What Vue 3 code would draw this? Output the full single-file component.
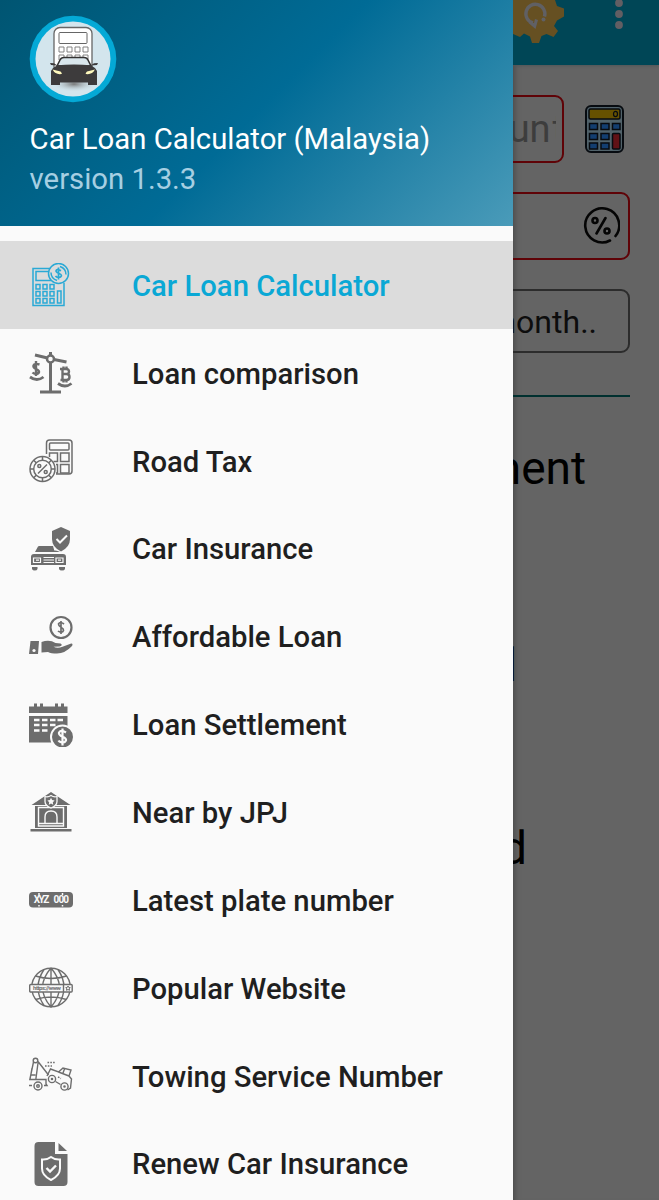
<script setup>
import { ref } from 'vue';

const active = ref('calculator');

const items = [
  { id: 'calculator', label: 'Car Loan Calculator' },
  { id: 'comparison', label: 'Loan comparison' },
  { id: 'tax', label: 'Road Tax' },
  { id: 'insurance', label: 'Car Insurance' },
  { id: 'affordable', label: 'Affordable Loan' },
  { id: 'settlement', label: 'Loan Settlement' },
  { id: 'office', label: 'Near by JPJ' },
  { id: 'plate', label: 'Latest plate number' },
  { id: 'website', label: 'Popular Website' },
  { id: 'towing', label: 'Towing Service Number' },
  { id: 'renew', label: 'Renew Car Insurance' }
];
</script>

<template>
  <div class="screen">
    <!-- Navigation drawer -->
    <aside class="drawer">
      <header class="drawer-header">
        <svg class="logo" viewBox="0 0 88 88">
          <defs>
            <radialGradient id="shade">
              <stop offset="0" stop-color="#777" />
              <stop offset="1" stop-color="#d3e5ed" stop-opacity="0" />
            </radialGradient>
          </defs>
          <circle cx="44" cy="44" r="43.3" fill="#04a9d6" />
          <circle cx="44" cy="44" r="37.5" fill="#d3e5ed" />
          <rect x="25" y="12.5" width="38" height="45" rx="6" fill="#fff" stroke="#666" stroke-width="1.3" />
          <rect x="30" y="17.5" width="28" height="11" rx="1" fill="#fff" stroke="#666" />
          <g fill="#fff" stroke="#777" stroke-width=".9">
            <path d="M30 32h5v5h-5zM38 32h5v5h-5zM46 32h5v5h-5zM54 32h5v5h-5zM30 40h5v5h-5zM38 40h5v5h-5zM46 40h5v5h-5zM54 40h5v5h-5z" />
          </g>
          <ellipse cx="45" cy="69" rx="23" ry="8" fill="url(#shade)" />
          <path d="M28 51l3-6q1-2.500 4-2.500h20q3 0 4 2.500l3 6z" fill="#d9e6ec" stroke="#333" stroke-width="1.600" />
          <path d="M22 70V56l2-3 4-2.500-6-.5-1-2 4 .2 3 2q17-1.500 34 0l3-2 4-.2-1 2-6 .5 4 2.500 2 3v14h-9v-2.500H31V70z" fill="#3d3b3c" />
          <path d="M23.500 54.500l8 2q2 2 1 2.500-6 1-9-4.500zM66 54.500l-8 2q-2 2-1 2.500 6 1 9-4.500z" fill="#fff9bd" />
        </svg>
        <div class="title">Car Loan Calculator (Malaysia)</div>
        <div class="version">version 1.3.3</div>
      </header>

      <nav class="menu">
        <a
          v-for="item in items"
          :key="item.id"
          class="menu-item"
          :class="{ active: item.id === active }"
          @click="active = item.id"
        >
          <svg class="icon" viewBox="0 0 44 44">
            <g v-if="item.id === 'calculator'" fill="none" stroke="currentColor" stroke-width="1.5">
              <path d="M21 5.500H4v37h31V20M20 8.500H7v9h15" />
              <path d="M7 21.500h4V26H7zM14 21.500h4V26h-4zM21 21.500h4V26h-4zM7 28.500h4V33H7zM14 28.500h4V33h-4zM21 28.500h4V33h-4zM7 35.500h4V40H7zM14 35.500h4V40h-4zM21 35.500h4V40h-4zM28.500 28H32v12h-3.500z" />
              <circle cx="29.500" cy="10.500" r="10" />
              <path d="M28 17.500q-6-2-6-8M31 3.500q6 2 6 8" />
              <path d="M32 7.800q-4.500-2.500-5 0c0 3 5.500 2 5.500 5-1 2.700-5 1.700-6 .2M29.500 4.500v12" stroke-width="1.700" />
            </g>
            <g v-else-if="item.id === 'comparison'" fill="none" stroke="currentColor" stroke-width="3">
              <path d="M21.500 12v28M11 41h21M6 4l12.500 3M25 8.500L37.500 11M21.500 1v3" />
              <circle cx="21.500" cy="8" r="3.500" stroke-width="2.500" />
              <path d="M1 26q7 5 13.500 0M29 32.500q7 5 13.500 0" stroke-width="2.800" />
              <path d="M10.500 13.500q-5-1.500-6 1c-1 4 6 3 5.500 6.500-1 3-5 2-6.500.5M7 10v15" stroke-width="2.400" />
              <path d="M33.500 18.500V29M31 18h6q3 0 3 2.600t-3 2.400h-3.500 4q3 0 3 3t-3 3h-6M34.500 15.500v3M37.500 15.500v3M34.500 28.500v3M37.500 28.500v3" stroke-width="2.400" />
            </g>
            <g v-else-if="item.id === 'tax'" fill="none" stroke="currentColor" stroke-width="1.500">
              <path d="M17.500 15V4q0-3 3-3H40q3 0 3 3v28q0 3-3 3H27" />
              <rect x="20.500" y="4" width="19.500" height="7" rx="1" />
              <path d="M20.500 18v-4h8v8.500h-4M31.500 14h8.500v8.500h-8.500zM27 25.500h1.500V34H27M31.500 25.500H40V34h-8.500z" />
              <circle cx="13.500" cy="30" r="12.500" />
              <circle cx="13.500" cy="30" r="8.800" />
              <path d="M9 34.500l9-9M13.500 17.500V21M13.500 39v3.500M1 30h3.500M22.500 30H26M4.700 21.200l2.500 2.500M22.300 21.200l-2.500 2.500M4.700 38.800l2.500-2.500M22.300 38.800l-2.500-2.500" />
              <circle cx="10.300" cy="27" r="1.500" /><circle cx="16.700" cy="33" r="1.500" />
            </g>
            <g v-else-if="item.id === 'insurance'" fill="currentColor">
              <path d="M10 19h14q1 4 2 6H6l3-5.500zM2 30q0-3 3-3h29q3 0 3 3v8H2zM3 40h5.500v2q-.5 1.500-2.700 1.500T3 42zM30 40h6v2q-.5 1.500-3 1.500T30 42zM23 25q3-3 8 0z" />
              <path d="M32 0l9 4v8q0 8-9 12.500-9-4.500-9-12.500V4z" />
              <path d="M27.500 12l3.500 3.500 7-7" fill="none" stroke="#fafafa" stroke-width="2" />
              <path d="M4.500 31h7v4.500h-7zM27 31h7v4.500h-7zM14.500 30.500H25M14.500 35.500H25M14.500 33H25M7 33.200h3M29 33.200h3" fill="none" stroke="#fafafa" stroke-width="1.200" />
            </g>
            <g v-else-if="item.id === 'affordable'" fill="currentColor">
              <circle cx="32" cy="12.500" r="10.500" fill="none" stroke="currentColor" stroke-width="2.200" />
              <path d="M35 9q-4-3-5.500 0c0 4 5.500 3 5 6.500-1 3-5 1-5.500.5M32 6v13" fill="none" stroke="currentColor" stroke-width="1.700" />
              <path d="M1.500 26H10l-1 13H0zM12.500 27q8-3 14 1l5 .5q3 2-1 3l-6 .2q4 2 9 0l8-3q3-.5 1.500 2.300-7 7.500-15 7.500-6 0-9-1.500l-6.500.5z" />
              <circle cx="5" cy="35.500" r="1.600" fill="#fafafa" />
            </g>
            <g v-else-if="item.id === 'settlement'" fill="currentColor">
              <path d="M0 3.500h38.500v6.500H0zM5 .5h3v4H5zM11 .5h3v4h-3zM26 .5h3v4h-3zM32 .5h3v4h-3zM0 13h38.500v10Q24 22 22.500 39.500H0z" />
              <path d="M5 17h5.500M13 17h5.500M21 17h5.500M28.500 17H34M5 22h5.500M13 22h5.500M21 22h5.500M5 27.500h5.500M13 27.500h5.500" fill="none" stroke="#fafafa" stroke-width="2.500" />
              <circle cx="33.500" cy="34" r="11.500" stroke="#fafafa" stroke-width="2" />
              <path d="M37 29.500q-5-3-7 0c-1 5 8 3.500 7 8-2 4-7 1-7.500 0M33.500 25.500v17" fill="none" stroke="#fafafa" stroke-width="2.200" />
            </g>
            <g v-else-if="item.id === 'office'" fill="currentColor">
              <path d="M2.500 15L22 2l19.500 13zM6 16h32v22H6zM1.500 39h41v2.500h-41z" />
              <path d="M9.500 17.500h25V36h-25zM10 33.500h24M16 33v-6q0-6 6-6t6 6v6" fill="none" stroke="#fafafa" stroke-width="1.400" />
              <path d="M22 5.500q3 2 6 1v5q0 4-6 6.500-6-2.500-6-6.500v-5q3 1 6-1z" stroke="#fafafa" stroke-width="1.300" />
              <path d="M22 7.800l1.100 2.300 2.500.3-1.800 1.800.4 2.500-2.200-1.200-2.200 1.200.4-2.500-1.800-1.800 2.500-.3z" fill="#fafafa" />
            </g>
            <g v-else-if="item.id === 'plate'">
              <rect x="0" y="14" width="44" height="15.500" rx="4" fill="currentColor" />
              <text x="4.800" y="25.300" class="plate-text" textLength="15.500">XYZ</text>
              <text x="24.500" y="25.300" class="plate-text" textLength="15.500">000</text>
              <path d="M10 15v2M33.500 15v2M10 27v1.500M33.500 27v1.500" stroke="#fafafa" stroke-width="1.500" />
            </g>
            <g v-else-if="item.id === 'website'" fill="none" stroke="currentColor" stroke-width="1.400">
              <circle cx="22" cy="21.500" r="19.300" />
              <path d="M22 2v39M22 2Q5 21.500 22 41Q39 21.500 22 2M15 3.500Q3 21.500 15 39.500M29 3.500q12 18 0 36M6.500 10q15.500 5 31 0M6.500 33.500q15.500-5 31 0" />
              <rect x=".7" y="18.500" width="42.500" height="7.500" rx="1" fill="#fafafa" />
              <path d="M34.500 18.500V26" />
              <path d="M39 20l.8 1.500 1.500.2-1.100 1 .3 1.600-1.500-.8-1.500.8.3-1.600-1.100-1 1.500-.2z" stroke-width="1" />
              <text x="4" y="24.300" class="url-text" textLength="28">https://www</text>
            </g>
            <g v-else-if="item.id === 'towing'" fill="none" stroke="currentColor" stroke-width="1.400">
              <circle cx="6.500" cy="6.500" r="2.300" />
              <path d="M4.500 8L.8 25.500h6L9 9M9 7.500L19.500 21M3 14l-2 11.500M.8 25.500H17V30l1 1.500h-3M0 31.500h3M1.500 21h5" />
              <circle cx="9" cy="32" r="4" /><circle cx="9" cy="32" r="1.300" />
              <path d="M19 20l2.500-5 8 3 4.500-4 8 2-2 6 2.500 3-1 9-3 2M26.500 27.500l5 3M19 20l-1 2M29.500 18l10.500 4M35.500 15l-1.500 4" />
              <circle cx="23" cy="25" r="3.600" /><circle cx="35.500" cy="32.500" r="3.600" />
              <circle cx="23" cy="25" r=".6" /><circle cx="35.500" cy="32.500" r=".6" />
              <path d="M18.500 8.500H26M16 12h7M29 23l3 1.500" stroke-dasharray="1.600 1.200" />
            </g>
            <g v-else fill="currentColor">
              <path d="M9.500 0H26v12h12.500v28q0 4-4 4h-25q-4 0-4-4V4q0-4 4-4zM29.500 1l8.500 8h-8.500z" />
              <path d="M22 15q4 3 9 2.500v9q0 7-9 11.500Q13 33.500 13 26.500v-9q5 .5 9-2.500z" fill="none" stroke="#fafafa" stroke-width="2" />
              <path d="M17.500 26l3.500 3.500 6-6" fill="none" stroke="#fafafa" stroke-width="2.400" />
            </g>
          </svg>
          <span class="label">{{ item.label }}</span>
        </a>
      </nav>
    </aside>

    <!-- Dimmed form under the drawer -->
    <main class="page">
      <div class="appbar">
        <svg class="gear" viewBox="0 0 52 44">
          <path
            d="M0 0H42l2 6 7 2.500v8l-7 4-3 5.500 4 5-4.500 6-7-3-5 2-2.500 7H19l-2-6.500-6-3-4 3.500-7-3z"
            fill="#665022"
          />
          <path class="arrow" d="M31.500 16.500A9.500 9.500 0 1 0 20 23" />
          <path d="M15.500 23l7 6 2.500-9-3-1-1 4z" fill="#606064" />
          <circle cx="30.500" cy="19.500" r="2" fill="#606064" />
        </svg>
        <svg class="dots" viewBox="0 0 8 30">
          <circle cx="4" cy="3" r="3.900" /><circle cx="4" cy="14" r="3.900" /><circle cx="4" cy="25" r="3.900" />
        </svg>
      </div>

      <div class="amount-row">
        <div class="field amount">
          <div class="amount-text"><span>Amoun</span><span class="cut">t</span></div>
        </div>
        <svg class="calc" viewBox="0 0 39 48">
          <rect x="1" y="1" width="37" height="46" rx="5" fill="#51626a" stroke="#070b10" stroke-width="2" />
          <rect x="4" y="4" width="31" height="10" rx="1.500" fill="#665100" stroke="#070b10" stroke-width="1.500" />
          <ellipse cx="30.500" cy="9" rx="2" ry="2.700" fill="none" stroke="#070b10" stroke-width="1.200" />
          <g fill="#133e70" stroke="#070b10" stroke-width="1.500">
            <path d="M4.500 18.500h8v6h-8zM16 18.500h8v6h-8zM27.500 18.500H35v6h-7.500zM4.500 28.500h8v6h-8zM16 28.500h8v6h-8zM4.500 38h8v6h-8zM16 38h8v6h-8z" />
          </g>
          <rect x="27.500" y="28.500" width="7.500" height="15.500" rx="1" fill="#611116" stroke="#070b10" stroke-width="1.500" />
        </svg>
      </div>

      <div class="field rate">
        <svg class="percent" viewBox="0 0 38 38">
          <path d="M33.500 29a17 17 0 1 0-5.500 4.500M23.500 11l-9 15.500" />
          <circle cx="13" cy="13.500" r="2.500" /><circle cx="25" cy="24" r="2.500" />
        </svg>
      </div>
      <div class="field months">month..</div>
      <div class="divider"></div>
      <div class="result payment">Payment</div>
      <div class="result middle">d</div>
      <div class="result last">d</div>
    </main>
  </div>
</template>

<style>
body {
  margin: 0;
}
</style>

<style scoped>
.screen {
  display: flex;
  width: 659px;
  height: 1200px;
  overflow: hidden;
  background: #646464;
  font-family: Roboto, "Liberation Sans", sans-serif;
}

.drawer {
  flex: none;
  width: 512.5px;
  background: #fafafa;
}

.drawer-header {
  box-sizing: border-box;
  height: 226px;
  padding: 15px 29px 0;
  background: linear-gradient(135deg, #005572 0%, #006b96 50%, #4a9bb9 100%);
}

.logo {
  display: block;
  width: 88px;
  height: 88px;
}

.title,
.version {
  padding-left: 0.6px;
  font-size: 29.3px;
  line-height: 40px;
  white-space: nowrap;
}

.title {
  margin-top: 16px;
  color: #fff;
}

.version {
  color: #a6cfe2;
}

.menu {
  padding-top: 15px;
}

.menu-item {
  display: flex;
  align-items: center;
  height: 87.85px;
  padding-left: 29px;
  color: #1f1f1f;
  cursor: pointer;
}

.menu-item.active {
  background: #dcdcdc;
  color: #0aa8d5;
}

.icon {
  width: 44px;
  height: 44px;
  margin-right: 59px;
  padding-top: 1px;
  color: #6d6d6d;
}

.active .icon {
  color: #2aa9d5;
}

.label {
  padding-top: 2px;
  font-size: 29.25px;
  font-weight: 500;
  white-space: nowrap;
}

.plate-text {
  fill: #fafafa;
  font-size: 10px;
  font-weight: 700;
}

.url-text {
  fill: currentColor;
  stroke: none;
  font-size: 6px;
  font-weight: 700;
}

.page {
  display: flex;
  flex-direction: column;
  flex: 1;
  align-items: flex-end;
  min-width: 0;
  overflow: hidden;
  box-shadow: inset 7px 0 6px -6px #444;
}

.appbar {
  display: flex;
  justify-content: space-between;
  width: 100%;
  height: 65px;
  background: #004656;
  box-shadow: 0 1px 3px #505558;
}

.gear {
  width: 52px;
  height: 44px;
}

.arrow {
  fill: none;
  stroke: #606064;
  stroke-width: 3.4;
}

.dots {
  width: 8px;
  height: 30px;
  margin-right: 36px;
  fill: #625e63;
}

.amount-row {
  display: flex;
  align-items: center;
  gap: 21px;
  margin: 29.5px 35px 0 0;
}

.field {
  display: flex;
  box-sizing: border-box;
  align-items: center;
  justify-content: flex-end;
  width: 600px;
  border: 2px solid #5f0307;
  border-radius: 9px;
}

.amount {
  height: 68px;
  padding-right: 6px;
}

.amount-text {
  display: flex;
  justify-content: flex-end;
  width: 400px;
  overflow: hidden;
  color: #3d3d3d;
  font-size: 38px;
}

/* The hint runs past the end of the field */
.cut {
  margin: 0 -9px 0 2px;
}

.calc {
  flex: none;
  width: 39px;
  height: 48px;
}

.rate {
  height: 68px;
  margin: 29px 29px 0 0;
  padding-right: 8px;
}

.percent {
  width: 38px;
  height: 38px;
  fill: none;
  stroke: #050505;
  stroke-width: 2.6;
  stroke-linecap: round;
}

.months {
  height: 64px;
  margin: 29px 29px 0 0;
  padding-top: 2px;
  padding-right: 31px;
  border-color: #2c2c2c;
  color: #0d0d0d;
  font-size: 32px;
}

.divider {
  width: 600px;
  height: 2px;
  margin: 42.5px 29px 0 0;
  background: #00302f;
}

.result {
  color: #000;
  font-size: 46px;
  line-height: 60px;
}

.payment {
  margin: 41px 73px 0 0;
}

.middle {
  margin: 137px 142px 0 0;
}

.last {
  margin: 123px 132px 0 0;
}
</style>
